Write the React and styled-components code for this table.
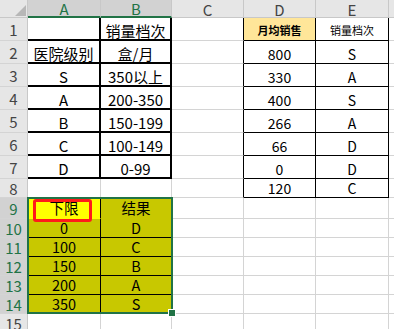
import styled, { createGlobalStyle } from "styled-components";

const GlobalStyle = createGlobalStyle`
  html, body { margin: 0; padding: 0; background: #fff; }
  body { font-family: "Noto Sans CJK SC", "Liberation Sans", sans-serif; }
`;

const GRID = "#d4d4d4";
const HEAD_LINE = "#c8c8c8";
const EXCEL_GREEN = "#217346";
const OLIVE = "#c8c800";
const THICK = "2px solid #000";
const THIN = "1px solid #000";

const COLS = ["A", "B", "C", "D", "E", "F"];
const ROWS = Array.from({ length: 15 }, (_, i) => i + 1);
const SELECTED_COLS = ["A", "B"];
const SELECTED_ROWS = [9, 10, 11, 12, 13, 14];

// cell contents and formats, keyed by address
const cells = {};
const put = (addr, spec) => (cells[addr] = { ...cells[addr], ...spec });

const levels = [
  ["", "销量档次"],
  ["医院级别", "盒/月"],
  ["S", "350以上"],
  ["A", "200-350"],
  ["B", "150-199"],
  ["C", "100-149"],
  ["D", "0-99"],
];
levels.forEach(([a, b], i) => {
  put(`A${i + 1}`, { text: a, right: THICK, bottom: THICK });
  put(`B${i + 1}`, { text: b, right: THICK, bottom: THICK });
});

const sales = [
  ["800", "S"],
  ["330", "A"],
  ["400", "S"],
  ["266", "A"],
  ["66", "D"],
  ["0", "D"],
  ["120", "C"],
];
for (let r = 1; r <= 8; r++) put(`C${r}`, { right: THIN });
put("D1", { text: "月均销售", fill: "#ffe699", bold: true, size: 11, right: THIN, bottom: THIN });
put("E1", { text: "销量档次", size: 11, right: THIN, bottom: THIN });
sales.forEach(([d, e], i) => {
  put(`D${i + 2}`, { text: d, size: 14, right: THIN, bottom: THIN });
  put(`E${i + 2}`, { text: e, size: 14, right: THIN, bottom: THIN });
});

const bounds = [
  ["0", "D"],
  ["100", "C"],
  ["150", "B"],
  ["200", "A"],
  ["350", "S"],
];
put("A9", { text: "下限", fill: "#ffff00", size: 14.5, right: THIN, bottom: "1px solid #ffff00", marked: true });
put("B9", { text: "结果", fill: OLIVE, size: 14.5, right: `1px solid ${OLIVE}`, bottom: `1px solid ${OLIVE}` });
bounds.forEach(([a, b], i) => {
  put(`A${i + 10}`, { text: a, fill: OLIVE, size: 14.5, right: THIN, bottom: THIN });
  put(`B${i + 10}`, { text: b, fill: OLIVE, size: 14.5, right: `1px solid ${OLIVE}`, bottom: THIN });
});

const App = () => {
  return (
    <>
      <GlobalStyle />
      <Sheet>
        <Corner>
          <svg width="28" height="18" viewBox="0 0 28 18">
            <polygon points="26,5 26,16 15,16" fill="#b7b7b7" />
          </svg>
        </Corner>
        {COLS.map((c, ci) => (
          <ColHead key={c} $col={ci + 2} $sel={SELECTED_COLS.includes(c)}>
            {c}
          </ColHead>
        ))}
        {ROWS.map((r) => (
          <Row key={r} r={r} />
        ))}
        <Selection>
          <FillHandle />
        </Selection>
      </Sheet>
    </>
  );
};

const Row = ({ r }) => (
  <>
    <RowHead $row={r + 1} $sel={SELECTED_ROWS.includes(r)}>
      {r}
    </RowHead>
    {COLS.map((c, ci) => {
      const spec = cells[`${c}${r}`] || {};
      return (
        <Cell
          key={c}
          $row={r + 1}
          $col={ci + 2}
          $fill={spec.fill}
          $right={spec.right}
          $bottom={spec.bottom}
          $size={spec.size}
          $bold={spec.bold}
          $tall={r <= 7}
        >
          {spec.text}
          {spec.marked && <RedMark />}
        </Cell>
      );
    })}
  </>
);

export default App;

const Sheet = styled.div`
  position: relative;
  display: grid;
  grid-template-columns: 28px 73px 71px 72px 72px 73px 73px;
  grid-template-rows: 18px repeat(7, 23px) 19px 21px repeat(6, 19px);
  width: 394px;
  height: 329px;
  overflow: hidden;
  background: #fff;
`;

const Corner = styled.div`
  grid-row: 1;
  grid-column: 1;
  box-sizing: border-box;
  background: #e6e6e6;
  border-right: 1px solid ${HEAD_LINE};
  border-bottom: 1px solid ${HEAD_LINE};
  svg {
    display: block;
  }
`;

const ColHead = styled.div`
  grid-row: 1;
  grid-column: ${(p) => p.$col};
  box-sizing: border-box;
  display: flex;
  align-items: center;
  justify-content: center;
  background: ${(p) => (p.$sel ? "#d2d2d2" : "#e6e6e6")};
  color: ${(p) => (p.$sel ? EXCEL_GREEN : "#444")};
  border-right: 1px solid ${HEAD_LINE};
  border-bottom: ${(p) => (p.$sel ? `2px solid ${EXCEL_GREEN}` : `1px solid ${HEAD_LINE}`)};
  font-size: 15px;
  line-height: 1;
  padding-top: 1px;
`;

const RowHead = styled.div`
  grid-row: ${(p) => p.$row};
  grid-column: 1;
  box-sizing: border-box;
  display: flex;
  align-items: center;
  justify-content: center;
  background: ${(p) => (p.$sel ? "#d2d2d2" : "#e6e6e6")};
  color: ${(p) => (p.$sel ? EXCEL_GREEN : "#444")};
  border-right: 1px solid ${HEAD_LINE};
  border-bottom: 1px solid ${GRID};
  font-size: 15px;
  line-height: 1;
  padding-top: 1px;
`;

const Cell = styled.div`
  grid-row: ${(p) => p.$row};
  grid-column: ${(p) => p.$col};
  box-sizing: border-box;
  position: relative;
  display: flex;
  align-items: center;
  justify-content: center;
  background: ${(p) => p.$fill || "#fff"};
  border-right: ${(p) => p.$right || `1px solid ${GRID}`};
  border-bottom: ${(p) => p.$bottom || `1px solid ${GRID}`};
  color: #000;
  font-size: ${(p) => p.$size || 15}px;
  font-weight: ${(p) => (p.$bold ? 700 : 400)};
  line-height: 1;
  white-space: nowrap;
  padding-top: ${(p) => (p.$tall ? 3 : 0)}px;
`;

const RedMark = styled.span`
  position: absolute;
  left: 5px;
  top: 1px;
  width: 59px;
  height: 23px;
  box-sizing: border-box;
  border: 3px solid #ff1a1a;
  border-radius: 3px;
  z-index: 3;
`;

const Selection = styled.div`
  position: relative;
  grid-column: 2 / 4;
  grid-row: 10 / 16;
  margin: -1px -1px 0 -1px;
  border: 2px solid ${EXCEL_GREEN};
  pointer-events: none;
  z-index: 2;
`;

const FillHandle = styled.div`
  position: absolute;
  right: -5px;
  bottom: -5px;
  width: 6px;
  height: 6px;
  background: ${EXCEL_GREEN};
  border: 1px solid #fff;
`;
